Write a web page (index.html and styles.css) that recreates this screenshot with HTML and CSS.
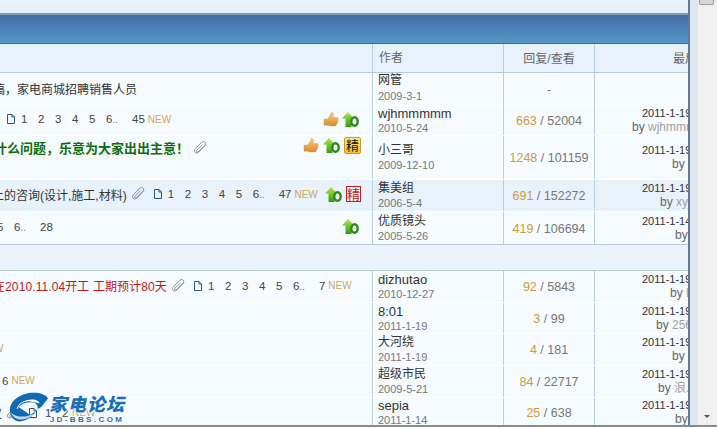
FILE: index.html
```html
<!DOCTYPE html>
<html lang="zh">
<head>
<meta charset="utf-8">
<title>家电论坛</title>
<link rel="stylesheet" href="styles.css">
</head>
<body>
<svg class="defs" width="0" height="0" aria-hidden="true">
  <defs>
    <linearGradient id="thumbG" x1="0" y1="0" x2="0" y2="1"><stop offset="0" stop-color="#f7cf7e"/><stop offset="1" stop-color="#dc8a2c"/></linearGradient>
    <linearGradient id="upG" x1="0" y1="0" x2="0" y2="1"><stop offset="0" stop-color="#b4e84a"/><stop offset="1" stop-color="#2f9a12"/></linearGradient>
    <symbol id="thumb" viewBox="0 0 16 15"><path d="M1 7h3.500C6 5.500 7.500 3 8 .8c1.500-.8 3 .4 2.600 2.200L10 5.500h4c1.500 0 1.800 2 .6 2.500.8.7.5 2-.4 2.300.4.900 0 2-.9 2.200.2 1-.5 1.500-1.300 1.500H7c-1.500 0-2-.7-3-.7H1z" fill="url(#thumbG)" stroke="#d8a050" stroke-width=".4"/></symbol>
    <symbol id="up10" viewBox="0 0 17 15"><path d="M6 0l6 6.500H9.500V15H3.500V6.500H0z" fill="url(#upG)"/><ellipse cx="12.500" cy="9.500" rx="3.200" ry="4.200" fill="#fff" stroke="#2a8a16" stroke-width="2.400"/></symbol>
    <symbol id="clip" viewBox="0 0 15 14"><path d="M13 3.500 5.800 11c-1.200 1.200-2.800 1.300-3.700.4s-.8-2.500.4-3.700L8.700 1.300c1-1 2.400-1.100 3.300-.3s.8 2.300-.2 3.300L5.600 10.500c-.6.600-1.400.7-1.800.3s-.3-1.200.3-1.800L9.500 3.800" fill="none" stroke="#8a8f94" stroke-width="1"/></symbol>
    <symbol id="page" viewBox="0 0 8 10"><path d="M.5.500h4.500l2.500 2.500v6.500h-7zM5 .500v2.500h2.500" fill="none" stroke="#2c5878" stroke-width="1"/></symbol>
  </defs>
</svg>
<div class="win">
  <div class="main">
    <div class="forum">
      <div class="top"></div>
      <div class="band"></div>
      <div class="row head">
        <div class="c title"></div>
        <div class="c auth"><span class="hname">作者</span></div>
        <div class="c num"><span class="hnum">回复/查看</span></div>
        <div class="c last"><span class="hlast">最后发表</span></div>
      </div>

      <div class="row r1">
        <div class="c title"><div class="tl m1"><span class="t">镐，家电商城招聘销售人员</span></div></div>
        <div class="c auth"><b class="zh">网管</b><i>2009-3-1</i></div>
        <div class="c num"><span class="dash">-</span></div>
        <div class="c last"></div>
      </div>

      <div class="row r2">
        <div class="c title">
          <div class="tl m2"><svg class="pg"><use href="#page"/></svg><span class="pn">1</span><span class="pn">2</span><span class="pn">3</span><span class="pn">4</span><span class="pn">5</span><span class="pn">6<em>..</em></span><span class="pl">45</span><span class="new">NEW</span></div>
          <div class="ic"><svg class="th"><use href="#thumb"/></svg><svg class="up"><use href="#up10"/></svg></div>
        </div>
        <div class="c auth"><b>wjhmmmmm</b><i>2010-5-24</i></div>
        <div class="c num"><span><u>663</u> / 52004</span></div>
        <div class="c last"><p>2011-1-19</p><p class="by o37">by <s>wjhmmmmm</s></p></div>
      </div>

      <div class="row r3">
        <div class="c title top-al">
          <div class="tl m3"><strong>什么问题，乐意为大家出出主意！</strong><svg class="cl"><use href="#clip"/></svg></div>
          <div class="ic"><svg class="th"><use href="#thumb"/></svg><svg class="up"><use href="#up10"/></svg><span class="bd gold">精</span></div>
        </div>
        <div class="c auth"><b class="zh">小三哥</b><i>2009-12-10</i></div>
        <div class="c num"><span><u>1248</u> / 101159</span></div>
        <div class="c last"><p>2011-1-19</p><p class="by o77">by <s>t</s></p></div>
      </div>

      <div class="row r4 alt">
        <div class="c title">
          <div class="tl m4"><span class="t">上的咨询(设计,施工,材料)</span><svg class="cl"><use href="#clip"/></svg><svg class="pg pg2"><use href="#page"/></svg><span class="pn">1</span><span class="pn">2</span><span class="pn">3</span><span class="pn">4</span><span class="pn">5</span><span class="pn">6<em>..</em></span><span class="pl">47</span><span class="new">NEW</span></div>
          <div class="ic"><svg class="up"><use href="#up10"/></svg><span class="bd red">精</span></div>
        </div>
        <div class="c auth"><b class="zh">集美组</b><i>2006-5-4</i></div>
        <div class="c num"><span><u>691</u> / 152272</span></div>
        <div class="c last"><p>2011-1-19</p><p class="by o65">by <s>xyj</s></p></div>
      </div>

      <div class="row r5">
        <div class="c title">
          <div class="tl m5"><span class="pn">5</span><span class="pn">6<em>..</em></span><span class="pl">28</span></div>
          <div class="ic ic5"><svg class="up"><use href="#up10"/></svg></div>
        </div>
        <div class="c auth"><b class="zh">优质镜头</b><i>2005-5-26</i></div>
        <div class="c num"><span><u>419</u> / 106694</span></div>
        <div class="c last"><p>2011-1-14</p><p class="by o80">by</p></div>
      </div>

      <div class="sep"></div>

      <div class="row r6">
        <div class="c title">
          <div class="tl m6"><span class="t redt">在2010.11.04开工 工期预计80天</span><svg class="cl"><use href="#clip"/></svg><svg class="pg pg2"><use href="#page"/></svg><span class="pn">1</span><span class="pn">2</span><span class="pn">3</span><span class="pn">4</span><span class="pn">5</span><span class="pn">6<em>..</em></span><span class="pl">7</span><span class="new">NEW</span></div>
        </div>
        <div class="c auth"><b>dizhutao</b><i>2010-12-27</i></div>
        <div class="c num"><span><u>92</u> / 5843</span></div>
        <div class="c last"><p>2011-1-19</p><p class="by o75">by <s>l</s></p></div>
      </div>

      <div class="row r7">
        <div class="c title"></div>
        <div class="c auth"><b>8:01</b><i>2011-1-19</i></div>
        <div class="c num"><span><u>3</u> / 99</span></div>
        <div class="c last"><p>2011-1-19</p><p class="by o61">by <s>256</s></p></div>
      </div>

      <div class="row r8">
        <div class="c title"><div class="tl m8"><span class="new">NEW</span></div></div>
        <div class="c auth"><b class="zh">大河绕</b><i>2011-1-19</i></div>
        <div class="c num"><span><u>4</u> / 181</span></div>
        <div class="c last"><p>2011-1-19</p><p class="by o77">by <s>c</s></p></div>
      </div>

      <div class="row r9">
        <div class="c title"><div class="tl m9"><span class="pl">6</span><span class="new">NEW</span></div></div>
        <div class="c auth"><b class="zh">超级市民</b><i>2009-5-21</i></div>
        <div class="c num"><span><u>84</u> / 22717</span></div>
        <div class="c last"><p>2011-1-19</p><p class="by o63">by <s>浪人</s></p></div>
      </div>

      <div class="row r10">
        <div class="c title"><div class="tl m10"><span class="t">仪</span><svg class="cl"><use href="#clip"/></svg><svg class="pg pg2 pg3"><use href="#page"/></svg><span class="pn">1</span><span class="pn">2</span><span class="new new10">NEW</span></div></div>
        <div class="c auth"><b>sepia</b><i>2011-1-14</i></div>
        <div class="c num"><span><u>25</u> / 638</span></div>
        <div class="c last"><p>2011-1-19</p><p class="by o80">by</p></div>
      </div>
    </div>
    <div class="edge"></div>
    <div class="bar">
      <div class="thumbbar"></div>
      <div class="arrow"></div>
    </div>
  </div>
  <div class="bottom"></div>
  <div class="logo">
    <svg class="swirl" viewBox="0 0 42 32">
      <path d="M2 18C2 8 14 0 27 0c7 0 13 2 15 6l-7 9-4 2c1-4-2-7-7-7-6 0-10 2-13 5l12 8 6-3c-3 5-9 9-15 10C8 31 2 26 2 18z" fill="#1268b3"/>
      <path d="M9 17c2-7 10-10 16-10 5 0 8 2 8 4L22 9c-6 0-10 3-12 8z" fill="#fff"/>
      <path d="M3 21c2 5 7 8 13 7 5-1 9-3 12-6l-4 1c-6 3-15 3-21-2z" fill="#fff" opacity=".75"/>
    </svg>
    <div class="lt"><span class="cn">家电论坛</span><span class="en">JD-BBS.COM</span></div>
  </div>
</div>
</body>
</html>
```
FILE: styles.css
```css
* { box-sizing: border-box; }
html, body { margin: 0; padding: 0; background: #fff; }
body { width: 717px; height: 428px; overflow: hidden; font-family: "Liberation Sans", "Noto Sans CJK SC", sans-serif; font-size: 12px; color: #444; }
.defs { position: absolute; }
.win { position: relative; width: 717px; height: 428px; display: flex; flex-direction: column; }
.main { display: flex; height: 425px; }
.forum { width: 688px; overflow: hidden; background: #f6fbff; flex: none; }
.edge { width: 10px; flex: none; background: #dde7ef; border-left: 2px solid #5f7a99; }
.bar { width: 19px; flex: none; background: #f0f0f0; display: flex; flex-direction: column; justify-content: space-between; align-items: center; padding-bottom: 7px; }
.thumbbar { width: 15px; height: 5px; margin-right: 3px; background: #d8d8d8; border: 1px solid #9a9a9a; border-top: 0; border-radius: 0 0 2px 2px; }
.arrow { width: 0; height: 0; margin-right: 2px; border-left: 3px solid transparent; border-right: 3px solid transparent; border-top: 3px solid #555; }
.bottom { height: 3px; background: linear-gradient(#8a8a8a 0 2px, #fff 2px); }

.top { height: 13px; background: linear-gradient(#eaf4fc, #e4f0fa); }
.band { height: 31px; background: linear-gradient(#456ca8, #5697c8); border-top: 2px solid #7f9fb8; border-bottom: 1px solid #3f68a6; }

.row { display: grid; grid-template-columns: 373px 131px 91px 145px; width: 740px; border-bottom: 1px solid #fff; }
.c { border-right: 1px solid #b7cfdf; }
.last { border-right: 0; overflow: hidden; }
.head { height: 29px; background: #e8f2fc; border-bottom: 1px solid #b5cadd; }
.head .c { display: flex; flex-direction: row; align-items: center; justify-content: flex-start; padding: 0 0 2px; color: #666; font-size: 12px; }
.head .num { justify-content: center; }
.hname { padding: 0 0 2px 6px; }
.hlast { padding-left: 78px; }
.r1 { height: 33px; }
.r2 { height: 30px; }
.r3 { height: 44px; }
.r4 { height: 32px; }
.r5 { height: 32px; border-bottom: 0; }
.r6 { height: 32px; }
.r7 { height: 31px; }
.r8 { height: 32px; }
.r9 { height: 32px; }
.r10 { height: 27px; border-bottom: 0; }
.alt { background: #e8f2fb; }
.sep { height: 27px; background: linear-gradient(#ebf4fd, #e8f3fc); border-top: 1px solid #b9cbdc; border-bottom: 1px solid #b5cadd; }

.title { display: flex; align-items: center; justify-content: space-between; overflow: hidden; padding-bottom: 3px; }
.r6 .title { padding-bottom: 2px; }
.r9 .title { padding-bottom: 2px; }
.r10 .title { padding-bottom: 0; }
.top-al { align-items: flex-start; padding-top: 1px; padding-bottom: 0; }
.tl { display: flex; align-items: center; white-space: nowrap; flex: none; }
.m1 { margin-left: -7px; }
.m2 { margin-left: 7px; }
.m3 { margin-left: -6px; padding-top: 1px; }
.m4 { margin-left: -8px; }
.m5 { margin-left: -3px; }
.m6 { margin-left: -7px; }
.m8 { margin-left: -23px; }
.m9 { margin-left: 2px; }
.m10 { margin-left: -10px; }

.t { font-size: 12px; color: #333; }
.redt { color: #c0181c; letter-spacing: .1px; }
strong { font-size: 13px; color: #0d6e0d; font-weight: 700; }
.pg { width: 8px; height: 10px; margin-right: 6px; flex: none; }
.pg2 { margin-left: 8px; }
.pg3 { margin-right: 8px; }
.cl { width: 15px; height: 14px; margin-left: 4px; flex: none; }
.pn { display: inline-block; width: 17px; font-size: 11.5px; color: #444; }
.pn em { font-style: normal; font-size: 10px; color: #777; }
.pl { margin-left: 9px; font-size: 11.5px; color: #444; }
.new { margin-left: 3px; font-size: 10px; color: #cfa85c; }
.new10 { margin-left: -7px; }
.m9 .pl { margin-left: 0; }

.ic { display: flex; align-items: center; gap: 3px; padding-right: 13px; flex: none; }
.r3 .ic, .r4 .ic { gap: 4px; padding-right: 11px; }
.th { width: 16px; height: 15px; }
.up { width: 17px; height: 15px; }
.bd { display: flex; align-items: center; justify-content: center; width: 17px; height: 17px; font-size: 13px; line-height: 1; color: #111; }
.gold { background: linear-gradient(#ffe98a, #f4c430); border: 1px solid #c79a18; border-radius: 2px; }
.red { width: 15px; height: 16px; background: #fff3f0; border: 1px solid #c02020; color: #c02020; }

.auth { padding: 0 0 0 5px; display: flex; flex-direction: column; justify-content: center; }
.auth b { font-weight: 400; font-size: 13px; line-height: 15px; color: #333; }
.auth b.zh { font-size: 12px; }
.auth i { font-style: normal; font-size: 11px; line-height: 14px; color: #777; }
.r1 .auth { padding-bottom: 3px; }
.r1 .auth i { margin-top: 1px; }
.num { display: flex; align-items: center; justify-content: center; padding-top: 1px; font-size: 12.5px; color: #777; white-space: nowrap; }
.num u { text-decoration: none; color: #cf9b3c; }
.dash { color: #777; }

.last { padding-left: 47px; display: flex; flex-direction: column; justify-content: center; white-space: nowrap; }
.last p { margin: 0; font-size: 11px; line-height: 14px; color: #333; }
.last .by { font-size: 12px; line-height: 15px; color: #666; }
.by s { text-decoration: none; color: #a0a0a0; }
.o37 { transform: translateX(-10px); }
.o61 { transform: translateX(14px); }
.o63 { transform: translateX(16px); }
.o65 { transform: translateX(18px); }
.o75 { transform: translateX(28px); }
.o77 { transform: translateX(30px); }
.o80 { transform: translateX(33px); }

.logo { position: absolute; left: 8px; top: 392px; display: flex; gap: 1px; align-items: flex-start; }
.swirl { width: 40px; height: 32px; flex: none; }
.lt { display: flex; flex-direction: column; align-items: center; padding-top: 4px; }
.cn { font-size: 18px; line-height: 19px; font-weight: 900; font-style: italic; color: #1a6fb8; letter-spacing: 1px; text-shadow: 1px 0 #fff, -1px 0 #fff, 0 1px #fff, 0 -1px #fff; }
.en { font-size: 8px; line-height: 9px; font-weight: 700; color: #1a6fb8; letter-spacing: 2.4px; text-shadow: 1px 0 #fff, -1px 0 #fff, 0 1px #fff, 0 -1px #fff; }
```
